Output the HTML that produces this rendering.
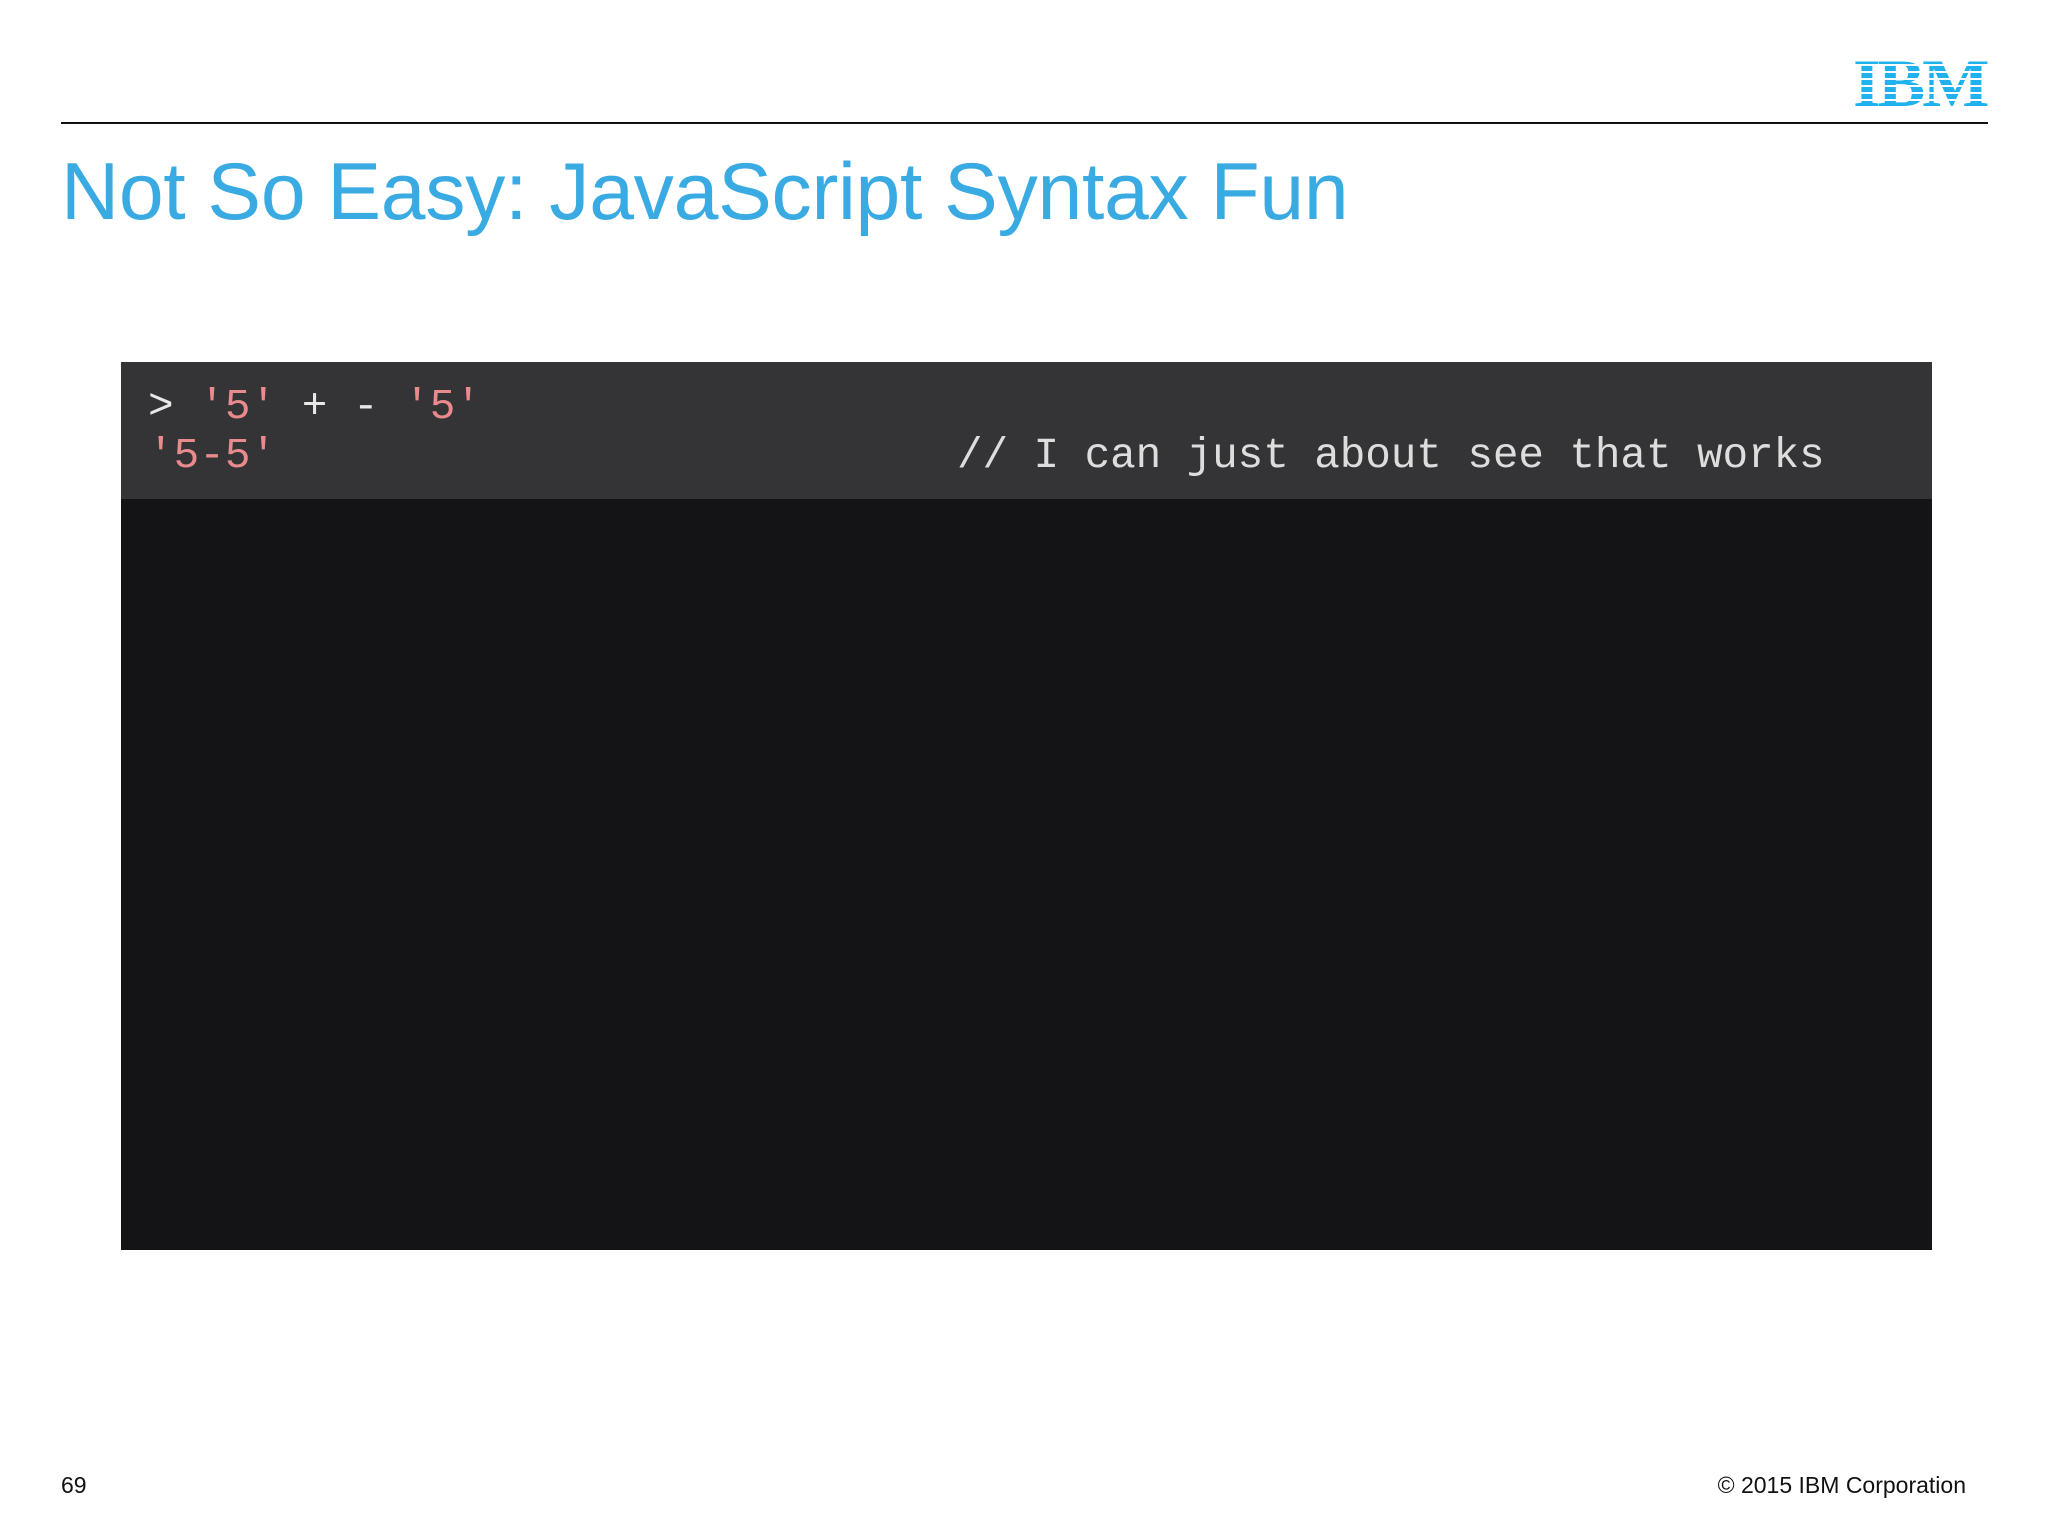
<!DOCTYPE html>
<html><head><meta charset="utf-8"><style>
html,body{margin:0;padding:0;background:#fff;}
body{width:2048px;height:1536px;position:relative;overflow:hidden;font-family:"Liberation Sans",sans-serif;}
.rule{position:absolute;left:61px;top:122px;width:1927px;height:2px;background:#111;}
.logo{position:absolute;left:1853px;top:52px;width:137px;height:62px;font:bold 68px/62px "Liberation Serif",serif;letter-spacing:-3px;color:#1fa8e8;transform:scaleX(1.05);transform-origin:left top;
background:repeating-linear-gradient(#1fb2ee 0 5px,transparent 5px 7px);-webkit-background-clip:text;background-clip:text;-webkit-text-fill-color:transparent;}
.title{position:absolute;left:61px;top:146px;font-size:80.5px;color:#3aabe2;white-space:nowrap;letter-spacing:-0.3px;}
.box{position:absolute;left:121px;top:362px;width:1811px;height:888px;background:#141316;}
.hdr{position:absolute;left:0;top:0;width:100%;height:137px;background:#343335;}
.code{position:absolute;font-family:"Liberation Mono",monospace;font-size:42.7px;white-space:pre;color:#e8e8e8;}
.p{color:#e98a8c;}
.foot{position:absolute;top:1472px;font-size:23px;color:#111;}
</style></head><body>
<div class="logo">IBM</div>
<div class="rule"></div>
<div class="title">Not So Easy: JavaScript Syntax Fun</div>
<div class="box"><div class="hdr"></div>
<div class="code" style="left:27px;top:20px;">&gt; <span class="p">'5'</span> + - <span class="p">'5'</span></div>
<div class="code p" style="left:27px;top:69px;">'5-5'</div>
<div class="code" style="left:836px;top:69px;color:#ddd;letter-spacing:-0.1px;">// I can just about see that works</div>
</div>
<div class="foot" style="left:61px;">69</div>
<div class="foot" style="right:82px;">© 2015 IBM Corporation</div>
</body></html>
